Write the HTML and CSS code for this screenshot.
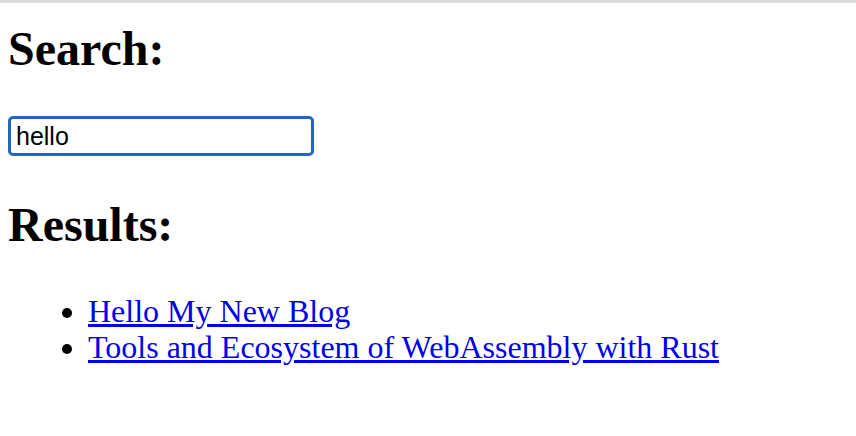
FILE: index.html
```html
<!DOCTYPE html>
<html>
<head>
<meta charset="utf-8">
<link rel="stylesheet" href="styles.css">
</head>
<body>
<div class="topline"></div>
<main class="page">
  <h1 class="title">Search:</h1>
  <input class="search" type="text" value="hello">
  <h1 class="title results-title">Results:</h1>
  <ul class="results">
    <li><a href="#">Hello My New Blog</a></li>
    <li><a href="#">Tools and Ecosystem of WebAssembly with Rust</a></li>
  </ul>
</main>
</body>
</html>
```
FILE: styles.css
```css
html, body {
  margin: 0;
  padding: 0;
  background: #ffffff;
}
body {
  font-family: "Liberation Serif", "Times New Roman", serif;
  color: #000;
}
.topline {
  height: 3px;
  background: #dcdcdc;
}
.page {
  padding: 0 8px;
  display: flex;
  flex-direction: column;
  align-items: flex-start;
}
.title {
  font-size: 48px;
  font-weight: bold;
  margin: 19px 0 0 0;
  line-height: 53px;
}
.search {
  box-sizing: border-box;
  margin-top: 41px;
  width: 306px;
  height: 40px;
  border: 3px solid #2466c8;
  border-radius: 5px;
  padding: 0 5px;
  font-family: "Liberation Sans", Arial, sans-serif;
  font-size: 25px;
  color: #000;
  outline: none;
}
.results-title {
  margin-top: 42px;
}
.results {
  margin: 42px 0 0 0;
  padding-left: 80px;
  font-size: 32px;
  line-height: 36px;
}
.results a {
  color: #0000ee;
}
```
